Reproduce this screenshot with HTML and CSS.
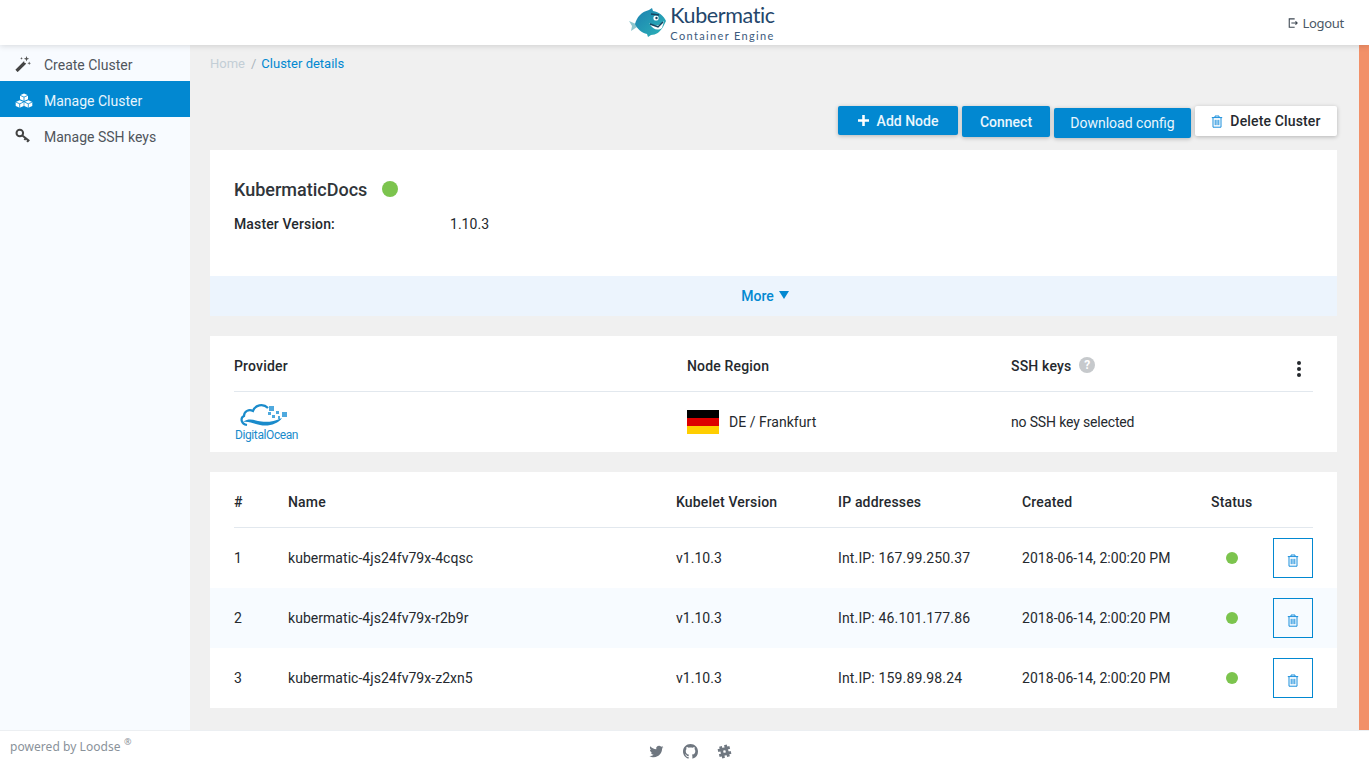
FILE: index.html
```html
<!DOCTYPE html>
<html lang="en">
<head>
<meta charset="utf-8">
<title>Kubermatic - Cluster details</title>
<link rel="stylesheet" href="styles.css">
</head>
<body>
<header class="topbar">
  <div class="logo">
    <svg class="fish" viewBox="0 0 40 32" width="40" height="32">
      <defs><linearGradient id="fg" x1="0" y1="0" x2="1" y2="1"><stop offset="0" stop-color="#1b7fb0"/><stop offset="1" stop-color="#2db5b8"/></linearGradient></defs>
      <path d="M0 14l7 3 1 3-6 4 1-5z" fill="#8fc7cf"/>
      <path d="M6 17C8 10 12 5 20 3l3-2 1 3c6 1 11 5 13 10l-3 6c-3 5-7 8-12 8l-3 2-1-3c-5-1-10-5-12-10z" fill="url(#fg)"/>
      <path d="M20 16c4 4 10 4 15-2l-2 7c-4 3-9 2-13-5z" fill="#fff"/>
      <path d="M21 17l8 3 5-5" fill="none" stroke="#17445f" stroke-width="1.5"/>
      <circle cx="27" cy="11" r="2.6" fill="#fff"/><circle cx="27.500" cy="11" r="1.2" fill="#17445f"/>
      <path d="M22 7l8 1" stroke="#17445f" stroke-width="1.4"/>
    </svg>
    <div class="logo-text">
      <span class="logo-name">Kubermatic</span>
      <span class="logo-sub">Container Engine</span>
    </div>
  </div>
  <a class="logout">
    <svg viewBox="0 0 12 12" width="10" height="10"><path d="M8 1H1.500v10H8M4 6h7M9 4l2 2-2 2" fill="none" stroke="#3d4752" stroke-width="1.3"/></svg>
    Logout
  </a>
</header>

<div class="middle">
  <nav class="sidebar">
    <a class="nav-item">
      <svg viewBox="0 0 16 16" width="16" height="16"><path d="M1.500 15L10 6.500" stroke="#444" stroke-width="3.200"/><path d="M9.500 7L11 5.500" stroke="#fff" stroke-width="1"/><path d="M11.500 0l.7 2 2 .7-2 .7-.7 2-.7-2-2-.7 2-.7zM14.200 5.500l.5 1.300 1.300.5-1.300.5-.5 1.300-.5-1.300-1.300-.5 1.300-.5zM6.500 1l.4 1 1 .4-1 .4-.4 1-.4-1-1-.4 1-.4z" fill="#555"/></svg>
      Create Cluster
    </a>
    <a class="nav-item active">
      <svg class="cubes" viewBox="0 0 18 16" width="18" height="16"><path d="M9 .5l4 1.800v4L9 8.100 5 6.300v-4zM4.700 7.200l4 1.800v4l-4 1.800-4-1.800V9zM13.300 7.200l4 1.800v4l-4 1.800-4-1.800V9z" fill="#fff"/><path d="M5 2.300l4 1.800 4-1.800M9 4.100v4M.7 9l4 1.800L8.700 9M4.700 10.800v4M9.300 9l4 1.800 4-1.800M13.300 10.800v4" fill="none" stroke="#0288d1" stroke-width=".8"/></svg>
      Manage Cluster
    </a>
    <a class="nav-item">
      <svg viewBox="0 0 16 16" width="16" height="16"><circle cx="4.800" cy="5" r="3.300" fill="none" stroke="#444" stroke-width="2"/><path d="M7.300 7.500l7 5.500M10.800 10.200l-1.400 1.800M13.300 12.300l-1.200 1.600" stroke="#444" stroke-width="2" fill="none"/></svg>
      Manage SSH keys
    </a>
  </nav>

  <main class="content">
    <div class="breadcrumb"><span class="crumb-home">Home</span><span class="crumb-sep">/</span><span class="crumb-current">Cluster details</span></div>

    <div class="actions">
      <button class="btn btn-blue btn-add"><svg viewBox="0 0 12 12" width="11" height="11"><path d="M6 0v12M0 6h12" stroke="#fff" stroke-width="2.800"/></svg>Add Node</button>
      <button class="btn btn-blue btn-connect">Connect</button>
      <button class="btn btn-blue btn-download">Download config</button>
      <button class="btn btn-white btn-delete"><svg class="trash" viewBox="0 0 12 13" width="12" height="13"><use href="#trash"/></svg>Delete Cluster</button>
    </div>

    <section class="card summary">
      <div class="summary-body">
        <h2 class="cluster-name">KubermaticDocs<span class="dot dot-large"></span></h2>
        <div class="version"><strong class="version-label">Master Version:</strong><span>1.10.3</span></div>
      </div>
      <div class="more">More <span class="more-arrow"></span></div>
    </section>

    <section class="card provider">
      <div class="provider-grid provider-head">
        <strong>Provider</strong>
        <strong>Node Region</strong>
        <strong class="ssh-head">SSH keys <span class="help">?</span></strong>
        <span class="kebab"><i></i><i></i><i></i></span>
      </div>
      <div class="provider-grid provider-row">
        <div class="do-logo">
          <svg viewBox="0 0 52 26" width="52" height="26"><path d="M8 22C2 21 1 15 5 13c0-5 5-7 9-5 2-6 10-8 15-3" fill="none" stroke="#1a8bcb" stroke-width="2.200"/><path d="M4 19c6-4 10-2 15-1s14 2 24-3c-4 6-14 9-22 7-6-1-11-4-17-3z" fill="#1a8bcb"/><path d="M30 3h5v5h-5zM37 8h3v3h-3zM43 9h5v5h-5zM33 12h3v3h-3zM39 13h2v3h-2zM29 9h3v3h-3z" fill="#4fa9de"/></svg>
          <span class="do-name">DigitalOcean</span>
        </div>
        <div class="region"><span class="flag"><i class="f1"></i><i class="f2"></i><i class="f3"></i></span>DE / Frankfurt</div>
        <div class="no-key">no SSH key selected</div>
      </div>
    </section>

    <section class="card nodes">
      <div class="node-grid node-head">
        <strong>#</strong><strong>Name</strong><strong>Kubelet Version</strong><strong>IP addresses</strong><strong>Created</strong><strong>Status</strong><span></span>
      </div>
      <div class="node-grid node-row">
        <span>1</span><span>kubermatic-4js24fv79x-4cqsc</span><span>v1.10.3</span><span class="ip">Int.IP: 167.99.250.37</span><span>2018-06-14, 2:00:20 PM</span><span class="status"><span class="dot"></span></span>
        <button class="icon-btn"><svg class="trash" viewBox="0 0 12 13" width="12" height="13"><use href="#trash"/></svg></button>
      </div>
      <div class="node-grid node-row tinted">
        <span>2</span><span>kubermatic-4js24fv79x-r2b9r</span><span>v1.10.3</span><span class="ip">Int.IP: 46.101.177.86</span><span>2018-06-14, 2:00:20 PM</span><span class="status"><span class="dot"></span></span>
        <button class="icon-btn"><svg class="trash" viewBox="0 0 12 13" width="12" height="13"><use href="#trash"/></svg></button>
      </div>
      <div class="node-grid node-row">
        <span>3</span><span>kubermatic-4js24fv79x-z2xn5</span><span>v1.10.3</span><span class="ip">Int.IP: 159.89.98.24</span><span>2018-06-14, 2:00:20 PM</span><span class="status"><span class="dot"></span></span>
        <button class="icon-btn"><svg class="trash" viewBox="0 0 12 13" width="12" height="13"><use href="#trash"/></svg></button>
      </div>
    </section>
  </main>

  <div class="accent"></div>
</div>

<footer class="footer">
  <div class="powered">powered by Loodse <sup>®</sup></div>
  <div class="social">
    <svg viewBox="0 0 24 24" width="15" height="15"><path fill="#6f7780" d="M23 5c-.8.4-1.700.6-2.600.7.900-.6 1.600-1.400 2-2.500-.9.500-1.800.9-2.900 1.100A4.600 4.600 0 0 0 11.600 8.500C7.800 8.300 4.400 6.500 2.100 3.700c-1.200 2.100-.6 4.800 1.400 6.100-.7 0-1.400-.2-2-.6 0 2.200 1.500 4.100 3.700 4.600-.7.200-1.400.2-2.100.1.600 1.800 2.300 3.100 4.300 3.200A9.300 9.300 0 0 1 .6 19c2.100 1.300 4.500 2.100 7.100 2.100 8.600 0 13.500-7.300 13.200-13.800.9-.6 1.600-1.400 2.100-2.300z"/></svg>
    <svg viewBox="0 0 16 16" width="15" height="15"><path fill="#6f7780" d="M8 0C3.580 0 0 3.580 0 8c0 3.540 2.290 6.530 5.470 7.590.4.070.55-.17.55-.38 0-.19-.01-.82-.01-1.490-2.010.37-2.530-.49-2.690-.94-.09-.23-.48-.94-.82-1.130-.28-.15-.68-.52-.01-.53.63-.01 1.080.58 1.230.82.72 1.210 1.870.87 2.330.66.070-.52.280-.87.510-1.070-1.780-.2-3.640-.89-3.640-3.950 0-.87.310-1.590.820-2.150-.080-.2-.360-1.020.080-2.120 0 0 .670-.21 2.200.82.640-.18 1.320-.27 2-.27s1.360.09 2 .27c1.530-1.040 2.200-.82 2.200-.82.440 1.100.160 1.920.080 2.120.51.560.820 1.270.820 2.150 0 3.070-1.870 3.750-3.650 3.950.290.250.540.730.540 1.480 0 1.070-.010 1.930-.010 2.200 0 .210.150.460.550.380A8.010 8.010 0 0 0 16 8c0-4.420-3.580-8-8-8z"/></svg>
    <svg viewBox="0 0 16 16" width="15" height="15"><path d="M5.300 1.500v13M10.700 1.500v13M1.500 5.300h13M1.500 10.700h13" stroke="#6f7780" stroke-width="3" fill="none" transform="rotate(-15 8 8)"/></svg>
  </div>
</footer>

<svg class="sprites" width="0" height="0"><symbol id="trash" viewBox="0 0 12 13"><path d="M.8 2.600h10.400M4 2.600V1h4v1.600M2 2.600v9.600h8V2.600M4.200 4.800v5.400M6 4.800v5.400M7.800 4.800v5.400" fill="none" stroke="currentColor" stroke-width="1"/></symbol></svg>
</body>
</html>
```
FILE: styles.css
```css
* { box-sizing: border-box; }
html, body { height: 100%; }
body {
  margin: 0;
  height: 100vh;
  overflow: hidden;
  display: flex;
  flex-direction: column;
  font-family: Roboto, "Liberation Sans", sans-serif;
  font-size: 14px;
  color: #25292e;
  background: #f0f0f0;
}
strong { font-weight: 500; color: #25292e; letter-spacing: .17px; }

.topbar {
  height: 45px;
  flex: none;
  position: relative;
  z-index: 2;
  display: flex;
  align-items: center;
  justify-content: center;
  background: #fff;
  box-shadow: 0 1px 6px rgba(0, 0, 0, .14);
}
.logo { display: flex; align-items: center; gap: 1px; margin-left: 35px; }
.fish { display: block; margin-top: 1px; }
.logo-text { display: flex; flex-direction: column; color: #23466b; }
.logo-name { font-family: Lato, sans-serif; font-size: 21.5px; line-height: 24px; letter-spacing: -.4px; margin-top: 0; }
.logo-sub { font-family: Lato, sans-serif; font-size: 11px; line-height: 13px; letter-spacing: 1.35px; color: #3b5a7d; margin-top: 2px; }
.logout {
  position: absolute;
  right: 25px;
  top: 14px;
  display: flex;
  align-items: center;
  gap: 5px;
  font-family: "Noto Sans", sans-serif;
  font-size: 13px;
  line-height: 18px;
  letter-spacing: -.3px;
  color: #4a5866;
}

.middle { flex: 1; min-height: 0; display: flex; }
.sidebar { width: 190px; flex: none; background: #f8fbff; }
.nav-item {
  height: 36px;
  display: flex;
  align-items: center;
  padding: 4px 0 0 15px;
  gap: 13px;
  color: #50555c;
}
.nav-item svg { flex: none; margin-top: -3px; }
.nav-item .cubes { margin-right: -2px; margin-top: -1px; }
.nav-item.active { background: #0288d1; color: #e8f5fd; }

.content { flex: 1; min-width: 0; padding: 0 22px 0 20px; }
.accent { width: 10px; flex: none; background: #f29068; }

.breadcrumb { height: 61px; padding-top: 11px; font-size: 13px; line-height: 16px; }
.crumb-home { color: #c3ced6; }
.crumb-sep { color: #aab4bc; margin: 0 5px 0 6px; }
.crumb-current { color: #0288d1; }

.actions { height: 44px; display: flex; justify-content: flex-end; align-items: flex-start; gap: 4px; }
.btn {
  height: 30px;
  border: 0;
  border-radius: 2px;
  padding: 0;
  font: 500 14px/30px Roboto, sans-serif;
  display: flex;
  align-items: center;
  justify-content: center;
  box-shadow: 0 1px 4px rgba(0, 0, 0, .25);
}
.btn-blue { background: #0288d1; color: #eaf6fd; }
.btn-white { background: #fff; color: #25292e; }
.btn-add { width: 120px; gap: 8px; height: 29px; }
.btn-connect { width: 88px; height: 31px; }
.btn-download { width: 137px; margin-top: 2px; font-weight: 400; }
.btn-delete { width: 142px; gap: 7px; letter-spacing: .15px; }
.trash { color: #1a8fdc; display: block; }

.card { background: #fff; margin-bottom: 20px; }
.summary-body { height: 126px; padding: 27px 24px 0; }
.cluster-name {
  margin: 0;
  display: flex;
  align-items: center;
  gap: 15px;
  font-size: 18px;
  font-weight: 500;
  line-height: 26px;
  color: #30353a;
}
.dot { display: inline-block; width: 12px; height: 12px; border-radius: 50%; background: #7cc44e; }
.dot-large { width: 16px; height: 16px; margin-top: -2px; }
.version { display: grid; grid-template-columns: 216px 1fr; margin-top: 11px; line-height: 20px; letter-spacing: .03px; }
.version-label { letter-spacing: .13px; }
.more {
  height: 40px;
  display: flex;
  align-items: center;
  justify-content: center;
  gap: 5px;
  padding-right: 17px;
  background: #ecf4fd;
  color: #0288d1;
  font-weight: 500;
}
.more-arrow { width: 0; height: 0; border: 5.500px solid transparent; border-top: 8px solid #0288d1; border-bottom: 0; margin-top: -2px; }

.provider { padding: 0 24px; }
.provider-grid { display: grid; grid-template-columns: 453px 324px 1fr 30px; align-items: center; }
.provider-head { height: 56px; border-bottom: 1px solid #e2e8ee; padding-top: 4px; }
.provider-row { height: 60px; }
.ssh-head { display: flex; align-items: center; gap: 5px; }
.help {
  width: 16px;
  height: 16px;
  border-radius: 50%;
  background: #c6c9cc;
  color: #fff;
  font-size: 12px;
  font-weight: 700;
  line-height: 16px;
  text-align: center;
  margin-left: 3px;
  margin-top: -2px;
}
.kebab { display: flex; flex-direction: column; gap: 2px; align-items: center; margin: 6px -1px 0 1px; }
.kebab i { width: 4px; height: 4px; border-radius: 50%; background: #25292e; display: block; }
.do-logo { display: flex; flex-direction: column; width: 70px; }
.do-logo svg { display: block; margin-left: 5px; }
.do-name { font-size: 12px; line-height: 13px; letter-spacing: -.4px; margin-left: 1px; color: #1a8bcb; }
.region { display: flex; align-items: center; gap: 10px; letter-spacing: .05px; }
.no-key { letter-spacing: -.16px; }
.flag { width: 32px; height: 24px; display: flex; flex-direction: column; }
.flag i { flex: 1; display: block; }
.f1 { background: #000; }
.f2 { background: #dd0000; }
.f3 { background: #ffce00; }

.nodes { margin-bottom: 0; }
.node-grid {
  display: grid;
  grid-template-columns: 54px 388px 162px 184px 189px 62px 40px;
  align-items: center;
  padding: 0 24px;
  letter-spacing: .04px;
}
.ip { letter-spacing: .15px; }
.node-head { height: 56px; position: relative; padding-top: 3px; }
.node-head::after { content: ""; position: absolute; left: 24px; right: 24px; bottom: 0; height: 1px; background: #e2e8ee; }
.node-row { height: 60px; }
.tinted { background: #f7fbff; }
.status { display: flex; padding-left: 15px; }
.icon-btn {
  width: 40px;
  height: 40px;
  padding: 5px 0 0;
  background: transparent;
  border: 1px solid #0288d1;
  display: flex;
  align-items: center;
  justify-content: center;
}

.footer {
  height: 41px;
  flex: none;
  position: relative;
  background: #fff;
  border-top: 1px solid #eceff2;
  display: flex;
  justify-content: center;
  align-items: center;
}
.powered {
  position: absolute;
  left: 10px;
  top: 7px;
  font-family: "Noto Sans", sans-serif;
  font-size: 12px;
  line-height: 18px;
  letter-spacing: .06px;
  color: #8a929a;
}
.powered sup { font-size: 9px; line-height: 0; vertical-align: 6px; }
.social { display: flex; gap: 19px; margin-top: 1px; margin-left: 11px; }
.social svg { display: block; }
.sprites { position: absolute; }
```
